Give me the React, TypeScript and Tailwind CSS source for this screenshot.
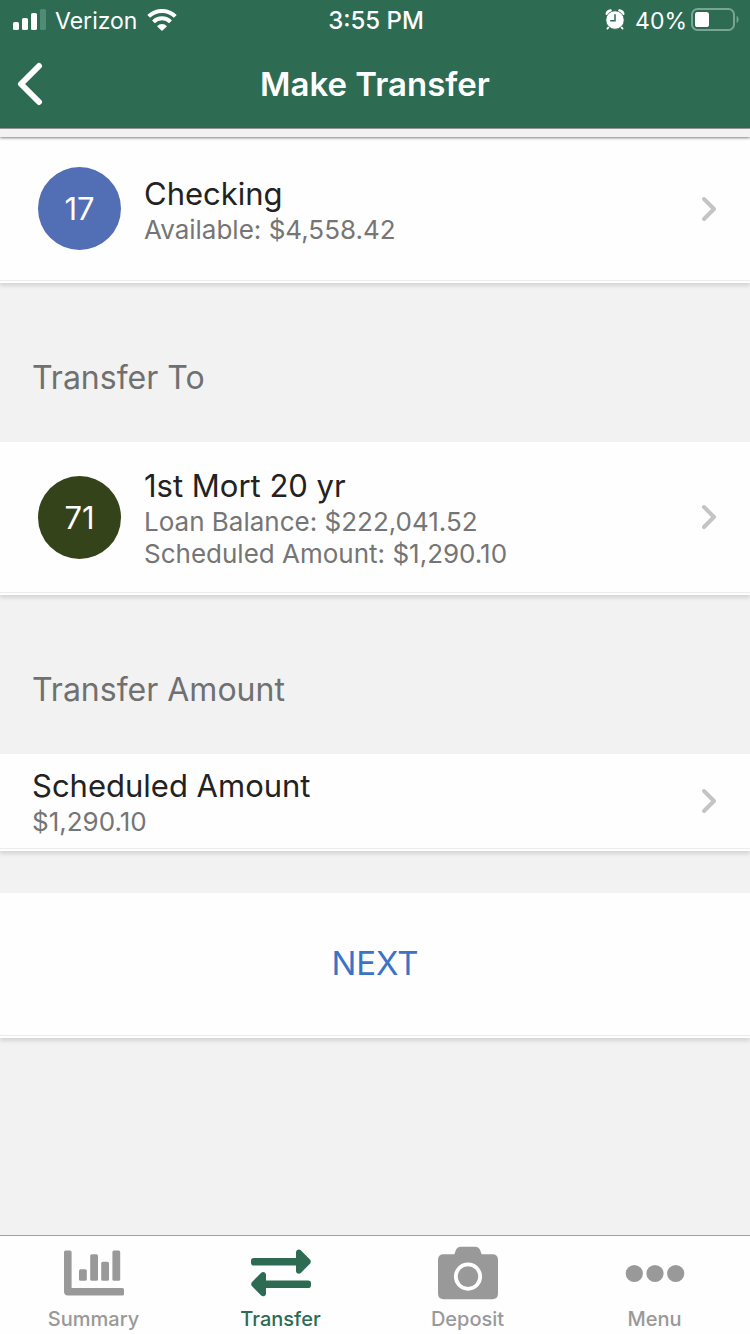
import type { ReactNode } from "react";

function SignalIcon() {
  return (
    <svg width="34" height="22" viewBox="0 0 34 22" aria-hidden="true">
      <g fill="#fff">
        <rect x="0" y="13" width="6" height="8" rx="1.6" />
        <rect x="9" y="9" width="6" height="12" rx="1.6" />
        <rect x="18" y="4" width="6" height="17" rx="1.6" />
      </g>
      <rect x="27" y="0" width="6" height="21" rx="1.6" fill="#4f8b77" />
    </svg>
  );
}

function WifiIcon() {
  return (
    <svg width="30" height="22" viewBox="0 0 30 22" aria-hidden="true">
      <g fill="none" stroke="#fff" strokeWidth="4">
        <path d="M1.7 7.4 A19 19 0 0 1 28.3 7.4" />
        <path d="M6.5 12.9 A12 12 0 0 1 23.5 12.9" />
      </g>
      <path d="M15 22 L10 17.2 A7 7 0 0 1 20 17.2 Z" fill="#fff" />
    </svg>
  );
}

function AlarmIcon() {
  return (
    <svg width="20" height="22" viewBox="0 0 20 22" aria-hidden="true">
      <g fill="none" stroke="#fff" strokeLinecap="round">
        <path d="M2 4.6 A4 4 0 0 1 5.4 1.8" strokeWidth="3" />
        <path d="M18 4.6 A4 4 0 0 0 14.6 1.8" strokeWidth="3" />
        <path d="M4.4 17.4 L2.4 19.6 M15.6 17.4 L17.6 19.6" strokeWidth="1.8" />
      </g>
      <circle cx="10" cy="11" r="9.2" fill="#fff" stroke="#2d6b53" strokeWidth="0.8" />
      <path d="M10 5.2 V11.7 H5.2" fill="none" stroke="#2d6b53" strokeWidth="1.5" />
    </svg>
  );
}

function BatteryIcon() {
  return (
    <svg width="48" height="24" viewBox="0 0 48 24" aria-hidden="true">
      <rect x="1" y="1" width="42" height="21" rx="5.5" fill="none" stroke="#7aa595" strokeWidth="2" />
      <rect x="4" y="4" width="14" height="15" rx="2.6" fill="#fff" />
      <path d="M45.6 7.8 C48.2 9.4 48.2 13.6 45.6 15.2 Z" fill="#7aa595" />
    </svg>
  );
}

function Chevron() {
  return (
    <svg width="16" height="26" viewBox="0 0 16 26" className="shrink-0" aria-hidden="true">
      <path d="M3 3 L13 13 L3 23" fill="none" stroke="#c4c4c4" strokeWidth="4" strokeLinecap="round" strokeLinejoin="round" />
    </svg>
  );
}

function SummaryIcon() {
  return (
    <svg width="60" height="60" viewBox="0 0 60 60" fill="currentColor" aria-hidden="true">
      <path d="M1.6 7.5 H6 Q7.6 7.5 7.6 9.1 V45 H58.4 Q60 45 60 46.6 V51 Q60 52.5 58.4 52.5 H4 Q0 52.5 0 48.5 V9.1 Q0 7.5 1.6 7.5 Z" />
      <rect x="15" y="26.2" width="7.8" height="11.6" rx="1.6" />
      <rect x="26.2" y="11.2" width="7.8" height="26.6" rx="1.6" />
      <rect x="37.2" y="18.7" width="7.8" height="19.1" rx="1.6" />
      <rect x="48.4" y="7.5" width="7.8" height="30.3" rx="1.6" />
    </svg>
  );
}

function TransferIcon() {
  return (
    <svg width="60" height="60" viewBox="0 0 60 60" fill="currentColor" aria-hidden="true">
      <path d="M2.8 15 H45 V9.3 C45 6.8 48 5.4 49.8 7.2 L59.2 16.8 Q60.4 18.6 59.2 20.4 L49.8 30 C48 31.8 45 30.4 45 28 V22.6 H2.8 Q0 22.6 0 19.8 V17.8 Q0 15 2.8 15 Z" />
      <path d="M57.2 37.4 H15 V31.8 C15 29.3 12 27.9 10.2 29.7 L0.8 39.3 Q-0.4 41.1 0.8 42.9 L10.2 52.5 C12 54.3 15 52.9 15 50.4 V45 H57.2 Q60 45 60 42.2 V40.2 Q60 37.4 57.2 37.4 Z" />
    </svg>
  );
}

function DepositIcon() {
  return (
    <svg width="60" height="60" viewBox="0 0 60 60" aria-hidden="true">
      <path
        d="M5.6 11.2 H16.4 L17.8 7.2 Q19.2 3.7 22.8 3.7 H37.2 Q40.8 3.7 42.2 7.2 L43.6 11.2 H54.4 Q60 11.2 60 16.8 V50.6 Q60 56.2 54.4 56.2 H5.6 Q0 56.2 0 50.6 V16.8 Q0 11.2 5.6 11.2 Z"
        fill="currentColor"
      />
      <circle cx="30" cy="33.6" r="12.2" fill="none" stroke="#fff" strokeWidth="3.8" />
    </svg>
  );
}

function MenuIcon() {
  return (
    <svg width="60" height="60" viewBox="0 0 60 60" fill="currentColor" aria-hidden="true">
      <circle cx="9.3" cy="30.5" r="8.6" />
      <circle cx="30" cy="30.5" r="8.6" />
      <circle cx="50.7" cy="30.5" r="8.6" />
    </svg>
  );
}

const cardClass =
  "flex w-full items-center border-b border-[#ececec] bg-[#fefefe] pr-[33px] text-left shadow-[0_2px_0_#fefefe,0_5px_4px_rgba(0,0,0,0.12)]";

function Badge({ className, children }: { className: string; children: ReactNode }) {
  return (
    <span className={`mr-[23px] ml-[38px] flex size-[83px] shrink-0 items-center justify-center rounded-full pt-0.5 text-[31px] text-white ${className}`}>
      {children}
    </span>
  );
}

function Details({ title, lines }: { title: string; lines: string[] }) {
  return (
    <span className="flex flex-1 flex-col pt-0.5">
      <span className="text-[31px] leading-10 text-[#222]">{title}</span>
      {lines.map((line) => (
        <span key={line} className="text-[26px] leading-8 text-[#757575]">
          {line}
        </span>
      ))}
    </span>
  );
}

function SectionTitle({ children }: { children: ReactNode }) {
  return <h2 className="flex h-[161px] items-center px-8 pt-8 text-[32px] leading-10 text-[#707070]">{children}</h2>;
}

const tabs = [
  { label: "Summary", icon: <SummaryIcon />, active: false },
  { label: "Transfer", icon: <TransferIcon />, active: true },
  { label: "Deposit", icon: <DepositIcon />, active: false },
  { label: "Menu", icon: <MenuIcon />, active: false },
];

export default function App() {
  return (
    <div className="flex min-h-screen flex-col bg-[#f2f2f2] font-['Inter','Liberation_Sans',sans-serif]">
      <header className="border-b border-[#9f9f9f] bg-[#2d6b53] text-white">
        <div className="grid h-10 grid-cols-[1fr_auto_1fr] items-center pr-[11px] pl-[13px] text-[23px]">
          <div className="flex items-center">
            <SignalIcon />
            <span className="mr-2.5 ml-2 pt-0.5">Verizon</span>
            <WifiIcon />
          </div>
          <span className="pt-0.5 text-[24px] font-medium">3:55 PM</span>
          <div className="flex items-center justify-end">
            <AlarmIcon />
            <span className="mr-1 ml-2.5 pt-0.5">40%</span>
            <BatteryIcon />
          </div>
        </div>
        <div className="grid h-[88px] grid-cols-[1fr_auto_1fr] items-center px-4">
          <button type="button" aria-label="Back" className="w-8">
            <svg width="28" height="44" viewBox="0 0 28 44" aria-hidden="true">
              <path d="M23 4 L5 22 L23 40" fill="none" stroke="#fff" strokeWidth="6" strokeLinecap="round" strokeLinejoin="round" />
            </svg>
          </button>
          <h1 className="pt-0.5 text-[33px] font-semibold">Make Transfer</h1>
        </div>
      </header>

      <main className="flex flex-1 flex-col">
        <div className="relative z-10 h-2 bg-[#f2f2f2] shadow-[0_1px_3px_rgba(0,0,0,0.5)]" />
        <button type="button" className={`${cardClass} h-[144px]`}>
          <Badge className="bg-[#526eb4]">17</Badge>
          <Details title="Checking" lines={["Available: $4,558.42"]} />
          <Chevron />
        </button>

        <SectionTitle>Transfer To</SectionTitle>
        <button type="button" className={`${cardClass} h-[151px]`}>
          <Badge className="bg-[#35431a]">71</Badge>
          <Details title="1st Mort 20 yr" lines={["Loan Balance: $222,041.52", "Scheduled Amount: $1,290.10"]} />
          <Chevron />
        </button>

        <SectionTitle>Transfer Amount</SectionTitle>
        <button type="button" className={`${cardClass} h-[95px] pl-8`}>
          <Details title="Scheduled Amount" lines={["$1,290.10"]} />
          <Chevron />
        </button>

        <button type="button" className={`${cardClass} mt-11 h-[143px] justify-center pl-[33px] text-[33px] text-[#3b74c6]`}>
          NEXT
        </button>
      </main>

      <nav className="grid h-[99px] grid-cols-4 border-t border-[#a0a0a0] bg-[#fefefe] pr-0.5">
        {tabs.map((tab) => (
          <a
            key={tab.label}
            href={`#${tab.label.toLowerCase()}`}
            aria-current={tab.active ? "page" : undefined}
            className={`flex flex-col items-center pt-[7px] text-[20px] leading-8 font-medium ${tab.active ? "text-[#2d6b53]" : "text-[#999]"}`}
          >
            {tab.icon}
            <span>{tab.label}</span>
          </a>
        ))}
      </nav>
    </div>
  );
}
